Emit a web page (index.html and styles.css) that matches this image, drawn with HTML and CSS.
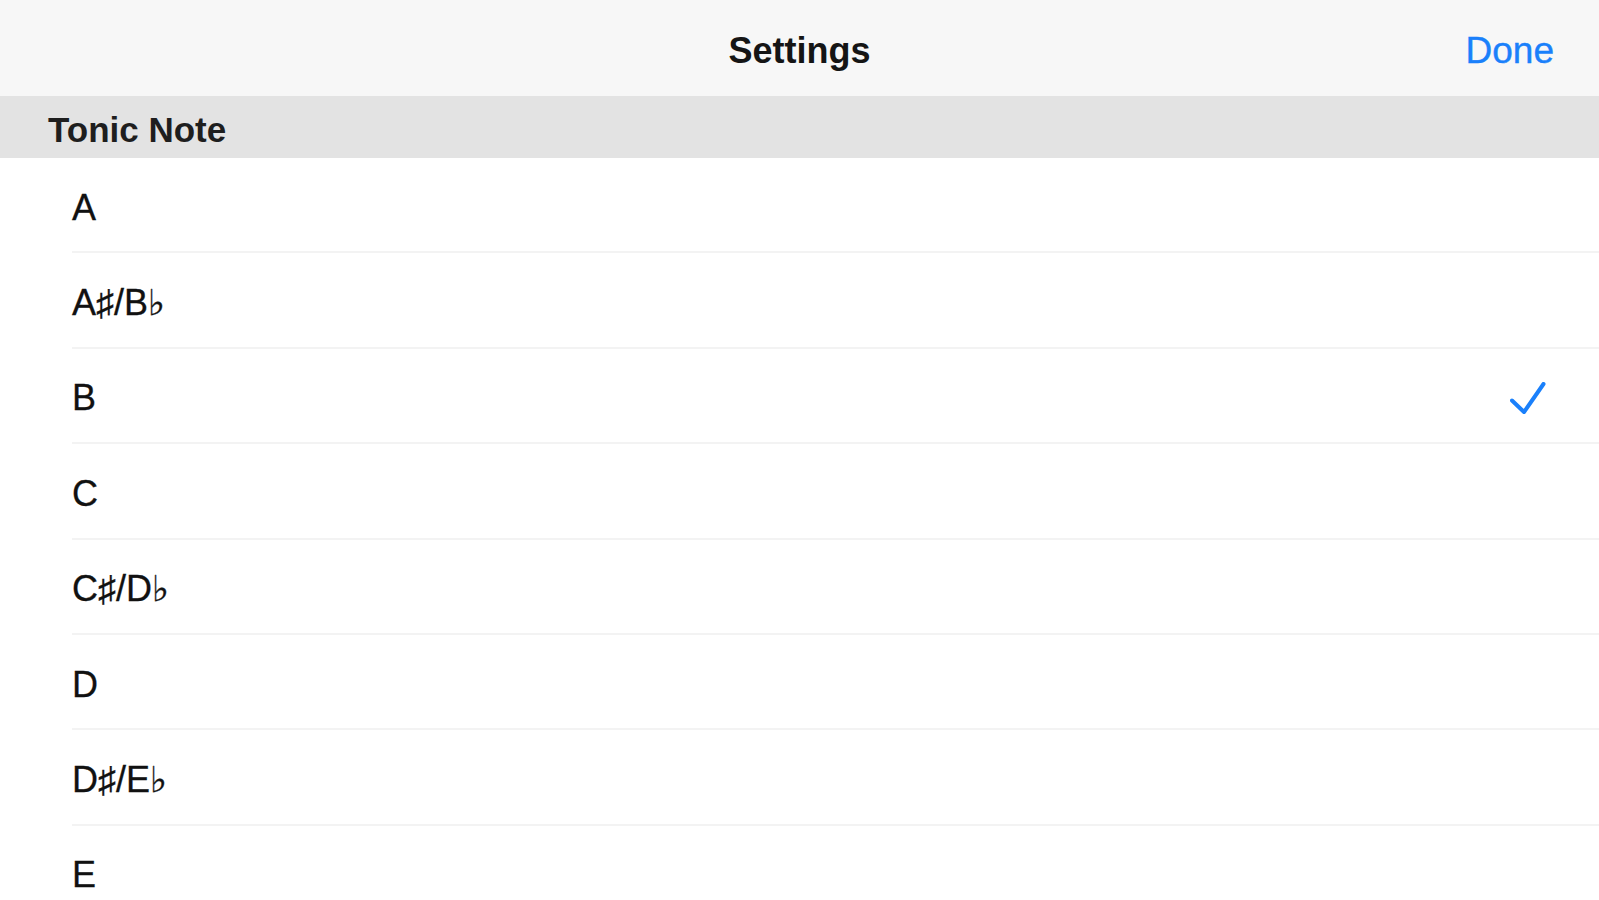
FILE: index.html
```html
<!DOCTYPE html>
<html lang="en">
<head>
<meta charset="utf-8">
<title>Settings</title>
<link rel="stylesheet" href="styles.css">
</head>
<body>
<div class="screen">
  <header class="navbar">
    <div class="nav-spacer"></div>
    <h1 class="nav-title">Settings</h1>
    <div class="nav-action"><span class="done">Done</span></div>
  </header>
  <div class="section-header">Tonic Note</div>
  <ul class="list">
    <li class="row"><span class="label">A</span></li>
    <li class="row"><span class="label">A♯/B♭</span></li>
    <li class="row selected"><span class="label">B</span>
      <svg class="check" width="36" height="34" viewBox="0 0 36 34" aria-hidden="true"><path d="M2 18.5 L14 30 L33.5 2" fill="none" stroke="#1a80fb" stroke-width="4" stroke-linecap="round" stroke-linejoin="round"/></svg>
    </li>
    <li class="row"><span class="label">C</span></li>
    <li class="row"><span class="label">C♯/D♭</span></li>
    <li class="row"><span class="label">D</span></li>
    <li class="row"><span class="label">D♯/E♭</span></li>
    <li class="row"><span class="label">E</span></li>
  </ul>
</div>
</body>
</html>
```

FILE: styles.css
```css
html, body {
  margin: 0;
  padding: 0;
  background: #ffffff;
  overflow: hidden;
}

body {
  font-family: "Liberation Sans", Arial, "DejaVu Sans", sans-serif;
  color: #111111;
}

.screen {
  width: 1599px;
  height: 900px;
  overflow: hidden;
  display: flex;
  flex-direction: column;
}

.navbar {
  box-sizing: border-box;
  height: 96px;
  flex: 0 0 96px;
  padding-top: 6px;
  background: #f7f7f7;
  display: grid;
  grid-template-columns: 1fr auto 1fr;
  align-items: center;
}

.nav-title {
  margin: 0;
  font-size: 36px;
  font-weight: bold;
  color: #151515;
  letter-spacing: 0;
}

.nav-action {
  display: flex;
  justify-content: flex-end;
  padding-right: 45px;
}

.done {
  font-size: 37px;
  color: #1a80fb;
  -webkit-text-stroke: 0.4px #1a80fb;
}

.section-header {
  box-sizing: border-box;
  height: 62px;
  flex: 0 0 62px;
  padding-top: 6px;
  background: #e3e3e3;
  display: flex;
  align-items: center;
  padding-left: 48px;
  font-size: 35px;
  font-weight: bold;
  color: #1e1e1e;
}

.list {
  list-style: none;
  margin: 0;
  padding: 0;
}

.row {
  box-sizing: border-box;
  height: 95.4px;
  margin-left: 72px;
  padding-top: 6px;
  padding-right: 53px;
  border-bottom: 2px solid #f3f3f3;
  display: flex;
  align-items: center;
  justify-content: space-between;
}

.label {
  font-size: 36px;
  color: #111111;
  -webkit-text-stroke: 0.3px #111111;
}

.check {
  display: block;
  margin-top: 2px;
}
```
